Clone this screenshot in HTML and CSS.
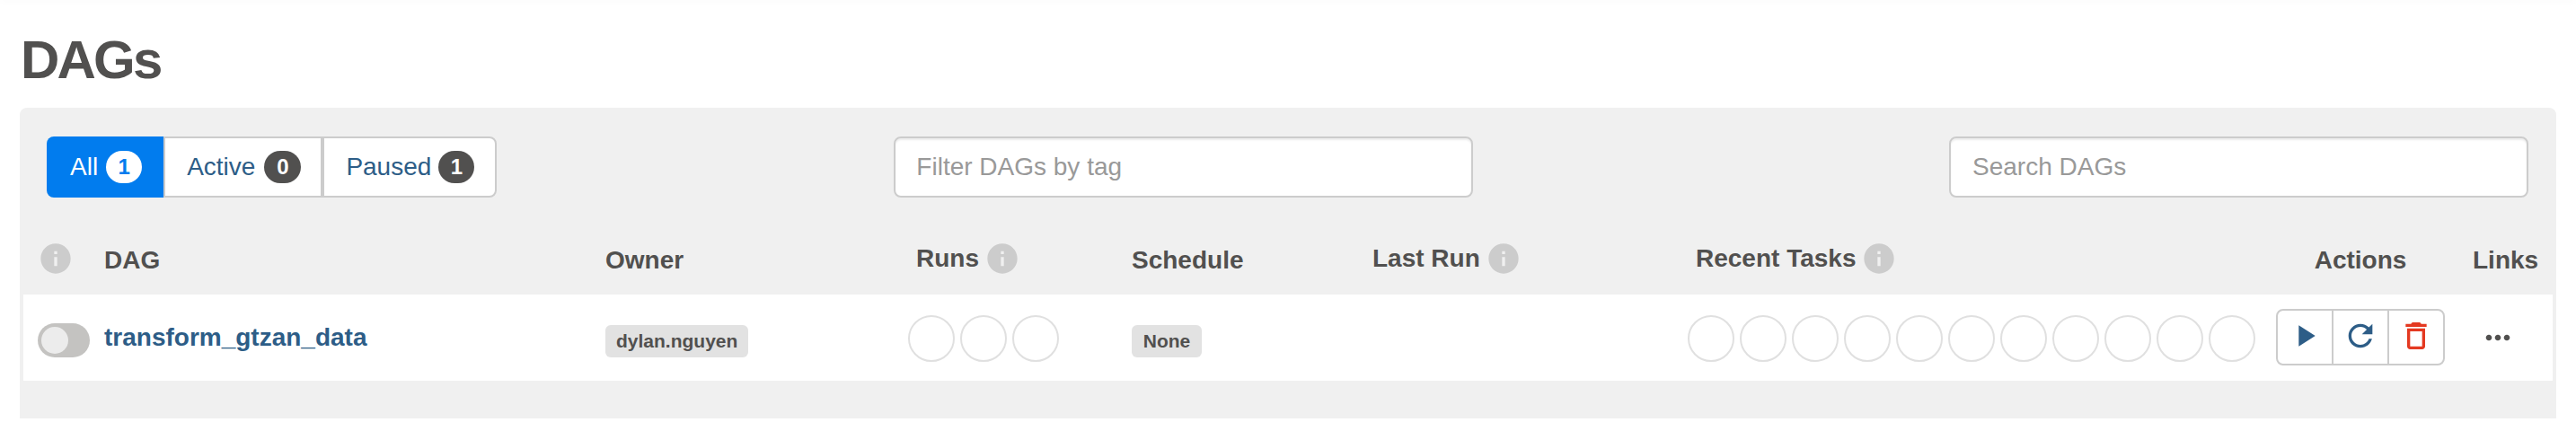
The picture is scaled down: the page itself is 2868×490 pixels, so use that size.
FILE: index.html
```html
<!DOCTYPE html>
<html lang="en">
<head>
<meta charset="utf-8">
<title>DAGs</title>
<link rel="stylesheet" href="styles.css">
</head>
<body>
<div class="nav-edge"></div>
<main class="page">
  <h2 class="title">DAGs</h2>
  <section class="panel">
    <div class="filters">
      <div class="status-group">
        <a class="status status-on">All <span class="count count-on">1</span></a>
        <a class="status status-active">Active <span class="count">0</span></a>
        <a class="status status-paused">Paused <span class="count">1</span></a>
      </div>
      <input class="field field-tag" placeholder="Filter DAGs by tag">
      <input class="field field-search" placeholder="Search DAGs">
    </div>
    <div class="grid head">
      <div class="th th-icon"><svg class="info" viewBox="0 0 24 24"><path d="M12 2C6.48 2 2 6.48 2 12s4.48 10 10 10 10-4.48 10-10S17.52 2 12 2zm1 15h-2v-6h2v6zm0-8h-2V7h2v2z"/></svg></div>
      <div class="th">DAG</div>
      <div class="th">Owner</div>
      <div class="th th-info pad">Runs <svg class="info" viewBox="0 0 24 24"><path d="M12 2C6.48 2 2 6.48 2 12s4.48 10 10 10 10-4.48 10-10S17.52 2 12 2zm1 15h-2v-6h2v6zm0-8h-2V7h2v2z"/></svg></div>
      <div class="th">Schedule</div>
      <div class="th th-info">Last Run <svg class="info" viewBox="0 0 24 24"><path d="M12 2C6.48 2 2 6.48 2 12s4.48 10 10 10 10-4.48 10-10S17.52 2 12 2zm1 15h-2v-6h2v6zm0-8h-2V7h2v2z"/></svg></div>
      <div class="th th-info pad">Recent Tasks <svg class="info" viewBox="0 0 24 24"><path d="M12 2C6.48 2 2 6.48 2 12s4.48 10 10 10 10-4.48 10-10S17.52 2 12 2zm1 15h-2v-6h2v6zm0-8h-2V7h2v2z"/></svg></div>
      <div class="th th-actions">Actions</div>
      <div class="th th-links">Links</div>
    </div>
    <div class="grid row">
      <div class="cell-toggle"><span class="toggle"><span class="knob"></span></span></div>
      <a class="dag-link">transform_gtzan_data</a>
      <div class="cell-badge"><span class="tag">dylan.nguyen</span></div>
      <div class="circles"><i></i><i></i><i></i></div>
      <div class="cell-badge"><span class="tag">None</span></div>
      <div></div>
      <div class="circles"><i></i><i></i><i></i><i></i><i></i><i></i><i></i><i></i><i></i><i></i><i></i></div>
      <div class="actions">
        <span class="act"><svg class="icon" viewBox="0 0 24 24"><path d="M8 5v14l11-7z"/></svg></span>
        <span class="act"><svg class="icon" viewBox="0 0 24 24"><path d="M17.65 6.35C16.2 4.9 14.21 4 12 4c-4.42 0-7.99 3.58-7.99 8s3.57 8 7.99 8c3.73 0 6.84-2.55 7.73-6h-2.08c-.82 2.33-3.04 4-5.65 4-3.31 0-6-2.69-6-6s2.69-6 6-6c1.66 0 3.14.69 4.22 1.78L13 11h7V4l-2.35 2.35z"/></svg></span>
        <span class="act"><svg class="icon icon-danger" viewBox="0 0 24 24"><path d="M6 19c0 1.1.9 2 2 2h8c1.1 0 2-.9 2-2V7H6v12zM8 9h8v10H8V9zm7.5-5l-1-1h-5l-1 1H5v2h14V4z"/></svg></span>
      </div>
      <div class="more"><svg class="icon icon-more" viewBox="0 0 24 24"><path d="M6 10c-1.1 0-2 .9-2 2s.9 2 2 2 2-.9 2-2-.9-2-2-2zm12 0c-1.1 0-2 .9-2 2s.9 2 2 2 2-.9 2-2-.9-2-2-2zm-6 0c-1.1 0-2 .9-2 2s.9 2 2 2 2-.9 2-2-.9-2-2-2z"/></svg></div>
    </div>
  </section>
</main>
</body>
</html>
```
FILE: styles.css
```css
* { box-sizing: border-box; }
html, body { margin: 0; background: #fff; }
body {
  font-family: "Liberation Sans", Arial, sans-serif;
  font-size: 28px;
  color: #51504f;
  height: 490px;
  overflow: hidden;
}
.nav-edge { height: 0; box-shadow: 0 0 8px 1px rgba(0, 0, 0, .05); }
.page { padding: 0 22px; }
.title {
  margin: 0;
  padding: 34px 0 20px 1px;
  font-size: 60px;
  line-height: 66px;
  font-weight: 700;
  letter-spacing: -2.8px;
}
.panel {
  background: #f0f0f0;
  border-radius: 8px 8px 0 0;
  padding: 32px 4px 42px;
}
.filters {
  display: flex;
  padding: 0 27px 0 26px;
}
.status-group { display: flex; height: 68px; }
.status {
  display: flex;
  align-items: center;
  gap: 9px;
  padding: 0 24px;
  background: #fff;
  color: #2d5d87;
  border: 2px solid #ccc;
  border-left: 0;
}
.status-on {
  background: #017cee;
  border: 0;
  color: #fff;
  border-radius: 8px 0 0 8px;
  padding: 0 24px 0 26px;
}
.status-active {
  border-left: 2px solid #ccc;
  gap: 10px;
  padding-right: 22px;
}
.status-active .count { min-width: 41px; }
.status-paused {
  border-left: 2px solid #ccc;
  border-radius: 0 8px 8px 0;
  gap: 8px;
  padding-right: 23px;
}
.count {
  min-width: 40px;
  height: 36px;
  padding: 0 12px;
  border-radius: 18px;
  background: #51504f;
  color: #fff;
  font-size: 24px;
  font-weight: 700;
  line-height: 36px;
  text-align: center;
}
.count-on { background: #fff; color: #017cee; }
.field {
  width: 645px;
  height: 68px;
  padding: 0 24px;
  border: 2px solid #ccc;
  border-radius: 8px;
  background: #fff;
  font: inherit;
  color: #51504f;
  box-shadow: inset 0 2px 2px rgba(0, 0, 0, .075);
}
.field::placeholder { color: #999; opacity: 1; }
.field-tag { margin-left: 442px; padding-left: 23px; }
.field-search { margin-left: auto; }
.grid {
  display: grid;
  grid-template-columns: 90px 558px 337px 249px 268px 351px 655px 219px 89px;
}
.head { height: 108px; align-items: end; }
.th {
  height: 40px;
  margin-bottom: 18px;
  line-height: 40px;
  font-weight: 700;
}
.th-icon { padding-left: 16px; margin-bottom: 20px; }
.th-info {
  display: flex;
  align-items: center;
  gap: 6px;
  margin-bottom: 20px;
}
.pad { padding-left: 9px; }
.th-actions { text-align: center; width: 188px; }
.info { width: 40px; height: 40px; fill: #ccc; display: block; }
.row { height: 96px; background: #fff; align-items: center; }
.cell-toggle { padding: 6px 0 0 16px; }
.toggle {
  display: block;
  width: 58px;
  height: 38px;
  padding: 4px;
  border-radius: 19px;
  background: #c4c3c1;
}
.knob {
  display: block;
  width: 30px;
  height: 30px;
  border-radius: 50%;
  background: #ececec;
}
.dag-link {
  font-weight: 700;
  color: #2d5d87;
  line-height: 40px;
}
.cell-badge { padding-top: 8px; }
.tag {
  display: inline-block;
  min-width: 78px;
  height: 36px;
  padding: 0 12px;
  border-radius: 6px;
  background: #e2e2e2;
  font-size: 21px;
  font-weight: 700;
  line-height: 36px;
  text-align: center;
}
.circles { display: flex; gap: 6px; padding-top: 2px; }
.circles i {
  width: 52px;
  height: 52px;
  border: 2px solid #e0e0e0;
  border-radius: 50%;
}
.actions {
  display: flex;
  width: 188px;
  height: 63px;
  border: 2px solid #ccc;
  border-radius: 8px;
  margin-top: -1px;
}
.act {
  flex: 1;
  display: flex;
  align-items: center;
  justify-content: center;
  padding-bottom: 3px;
  border-left: 2px solid #ccc;
}
.act:first-child { border-left: 0; }
.icon { width: 40px; height: 40px; fill: #2d5d87; display: block; }
.icon-danger { fill: #e43921; }
.icon-more { fill: #51504f; }
.more { display: flex; padding-left: 8px; }
```
